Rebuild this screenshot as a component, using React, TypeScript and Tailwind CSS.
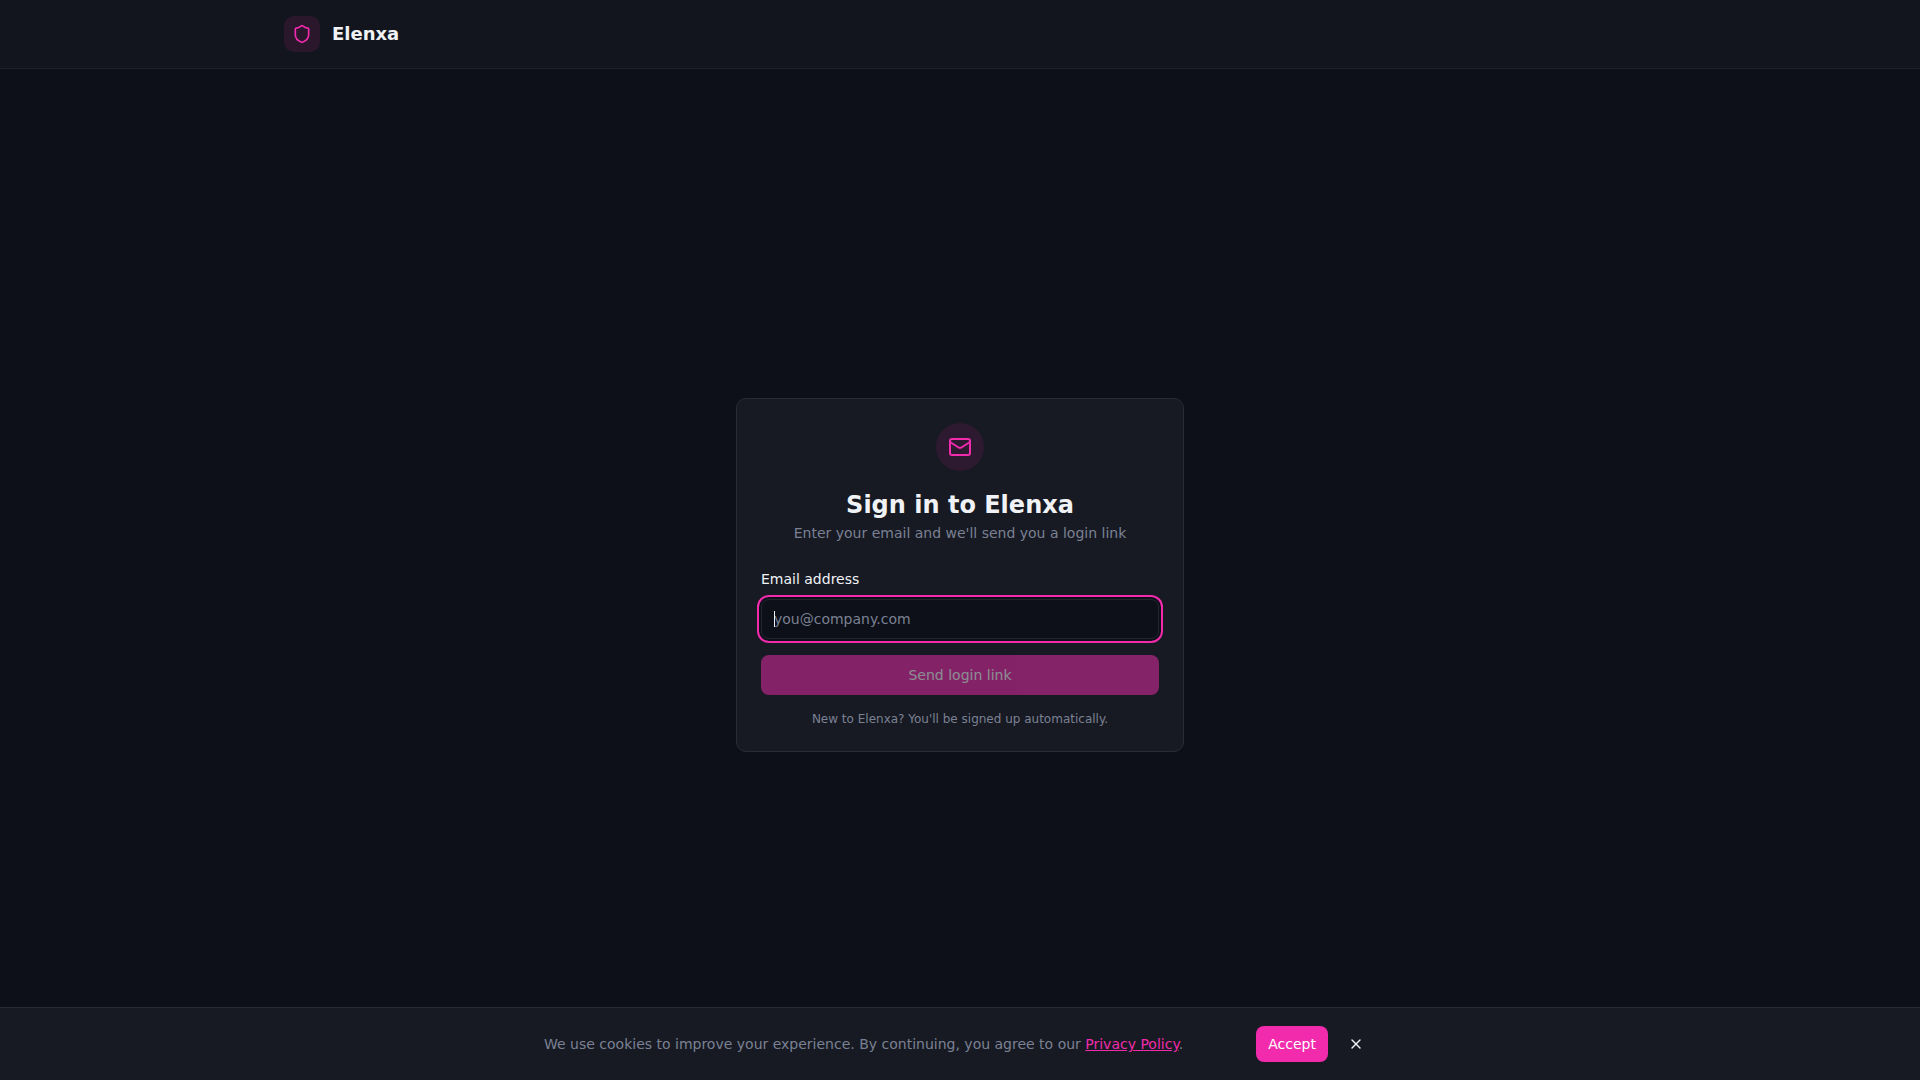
import { useState } from "react";
import { Mail, Shield, X } from "lucide-react";

function Header() {
  return (
    <header className="border-b border-[#1e212b] bg-[#12151e]">
      <div className="mx-auto flex max-w-[1400px] items-center gap-3 px-6 py-4">
        <div className="flex size-9 items-center justify-center rounded-[10px] bg-[#2a172c]">
          <Shield className="size-5 text-[#f12bac]" />
        </div>
        <span className="text-lg font-semibold">Elenxa</span>
      </div>
    </header>
  );
}

function SignInCard() {
  const [email, setEmail] = useState("");

  return (
    <section className="w-full max-w-md rounded-[10px] border border-[#292c37] bg-[#171a23] p-6">
      <div className="flex flex-col items-center text-center">
        <div className="mb-4 flex size-12 items-center justify-center rounded-full bg-[#2d1930]">
          <Mail className="size-6 text-[#f12bac]" />
        </div>
        <h1 className="text-2xl leading-9 font-semibold">Sign in to Elenxa</h1>
        <p className="text-sm text-[#7b8193]">Enter your email and we'll send you a login link</p>
      </div>
      <form className="mt-6 flex flex-col gap-4" onSubmit={(e) => e.preventDefault()}>
        <div className="flex flex-col gap-2">
          <label htmlFor="email" className="text-sm leading-6">
            Email address
          </label>
          <div className="relative flex items-center">
            <input
              id="email"
              type="email"
              autoFocus
              placeholder="you@company.com"
              value={email}
              onChange={(e) => setEmail(e.target.value)}
              className="peer h-10 w-full rounded-lg border border-[#232630] bg-[#0d1018] px-3 text-sm outline-none ring-offset-[#0d1018] placeholder:text-[#7b8193] placeholder-shown:caret-transparent focus:ring-2 focus:ring-[#f12bac] focus:ring-offset-2"
            />
            {/* Steady caret while the empty field has focus */}
            <span
              aria-hidden="true"
              className="pointer-events-none absolute left-3 ml-px hidden h-4 w-px bg-[#f0f2f5] peer-placeholder-shown:peer-focus:block"
            />
          </div>
        </div>
        <button
          type="submit"
          disabled={email === ""}
          className="h-10 w-full rounded-lg bg-[#f12bac] text-sm font-medium text-white disabled:opacity-50"
        >
          Send login link
        </button>
      </form>
      <p className="mt-4 text-center text-xs text-[#7b8193]">New to Elenxa? You'll be signed up automatically.</p>
    </section>
  );
}

function CookieBar({ onClose }: { onClose: () => void }) {
  return (
    <aside className="fixed inset-x-0 bottom-0 border-t border-[#292c37] bg-[#171a23]">
      <div className="mx-auto flex max-w-4xl items-center justify-between gap-4 px-8 py-4">
        <p className="text-sm text-[#7b8193]">
          We use cookies to improve your experience. By continuing, you agree to our{" "}
          <a href="#privacy" className="text-[#f12bac] underline">
            Privacy Policy
          </a>
          .
        </p>
        <div className="flex shrink-0 items-center gap-2">
          <button type="button" onClick={onClose} className="h-9 rounded-lg bg-[#f12bac] px-3 text-sm font-medium text-white">
            Accept
          </button>
          <button type="button" onClick={onClose} aria-label="Close" className="flex size-10 items-center justify-center rounded-lg">
            <X className="size-4" />
          </button>
        </div>
      </div>
    </aside>
  );
}

export default function App() {
  const [showCookies, setShowCookies] = useState(true);

  return (
    <div className="flex min-h-screen flex-col bg-[#0d1018] font-['DejaVu_Sans',sans-serif] text-[#f0f2f5]">
      <Header />
      <main className="flex flex-1 items-center justify-center px-4">
        <SignInCard />
      </main>
      {showCookies && <CookieBar onClose={() => setShowCookies(false)} />}
    </div>
  );
}
